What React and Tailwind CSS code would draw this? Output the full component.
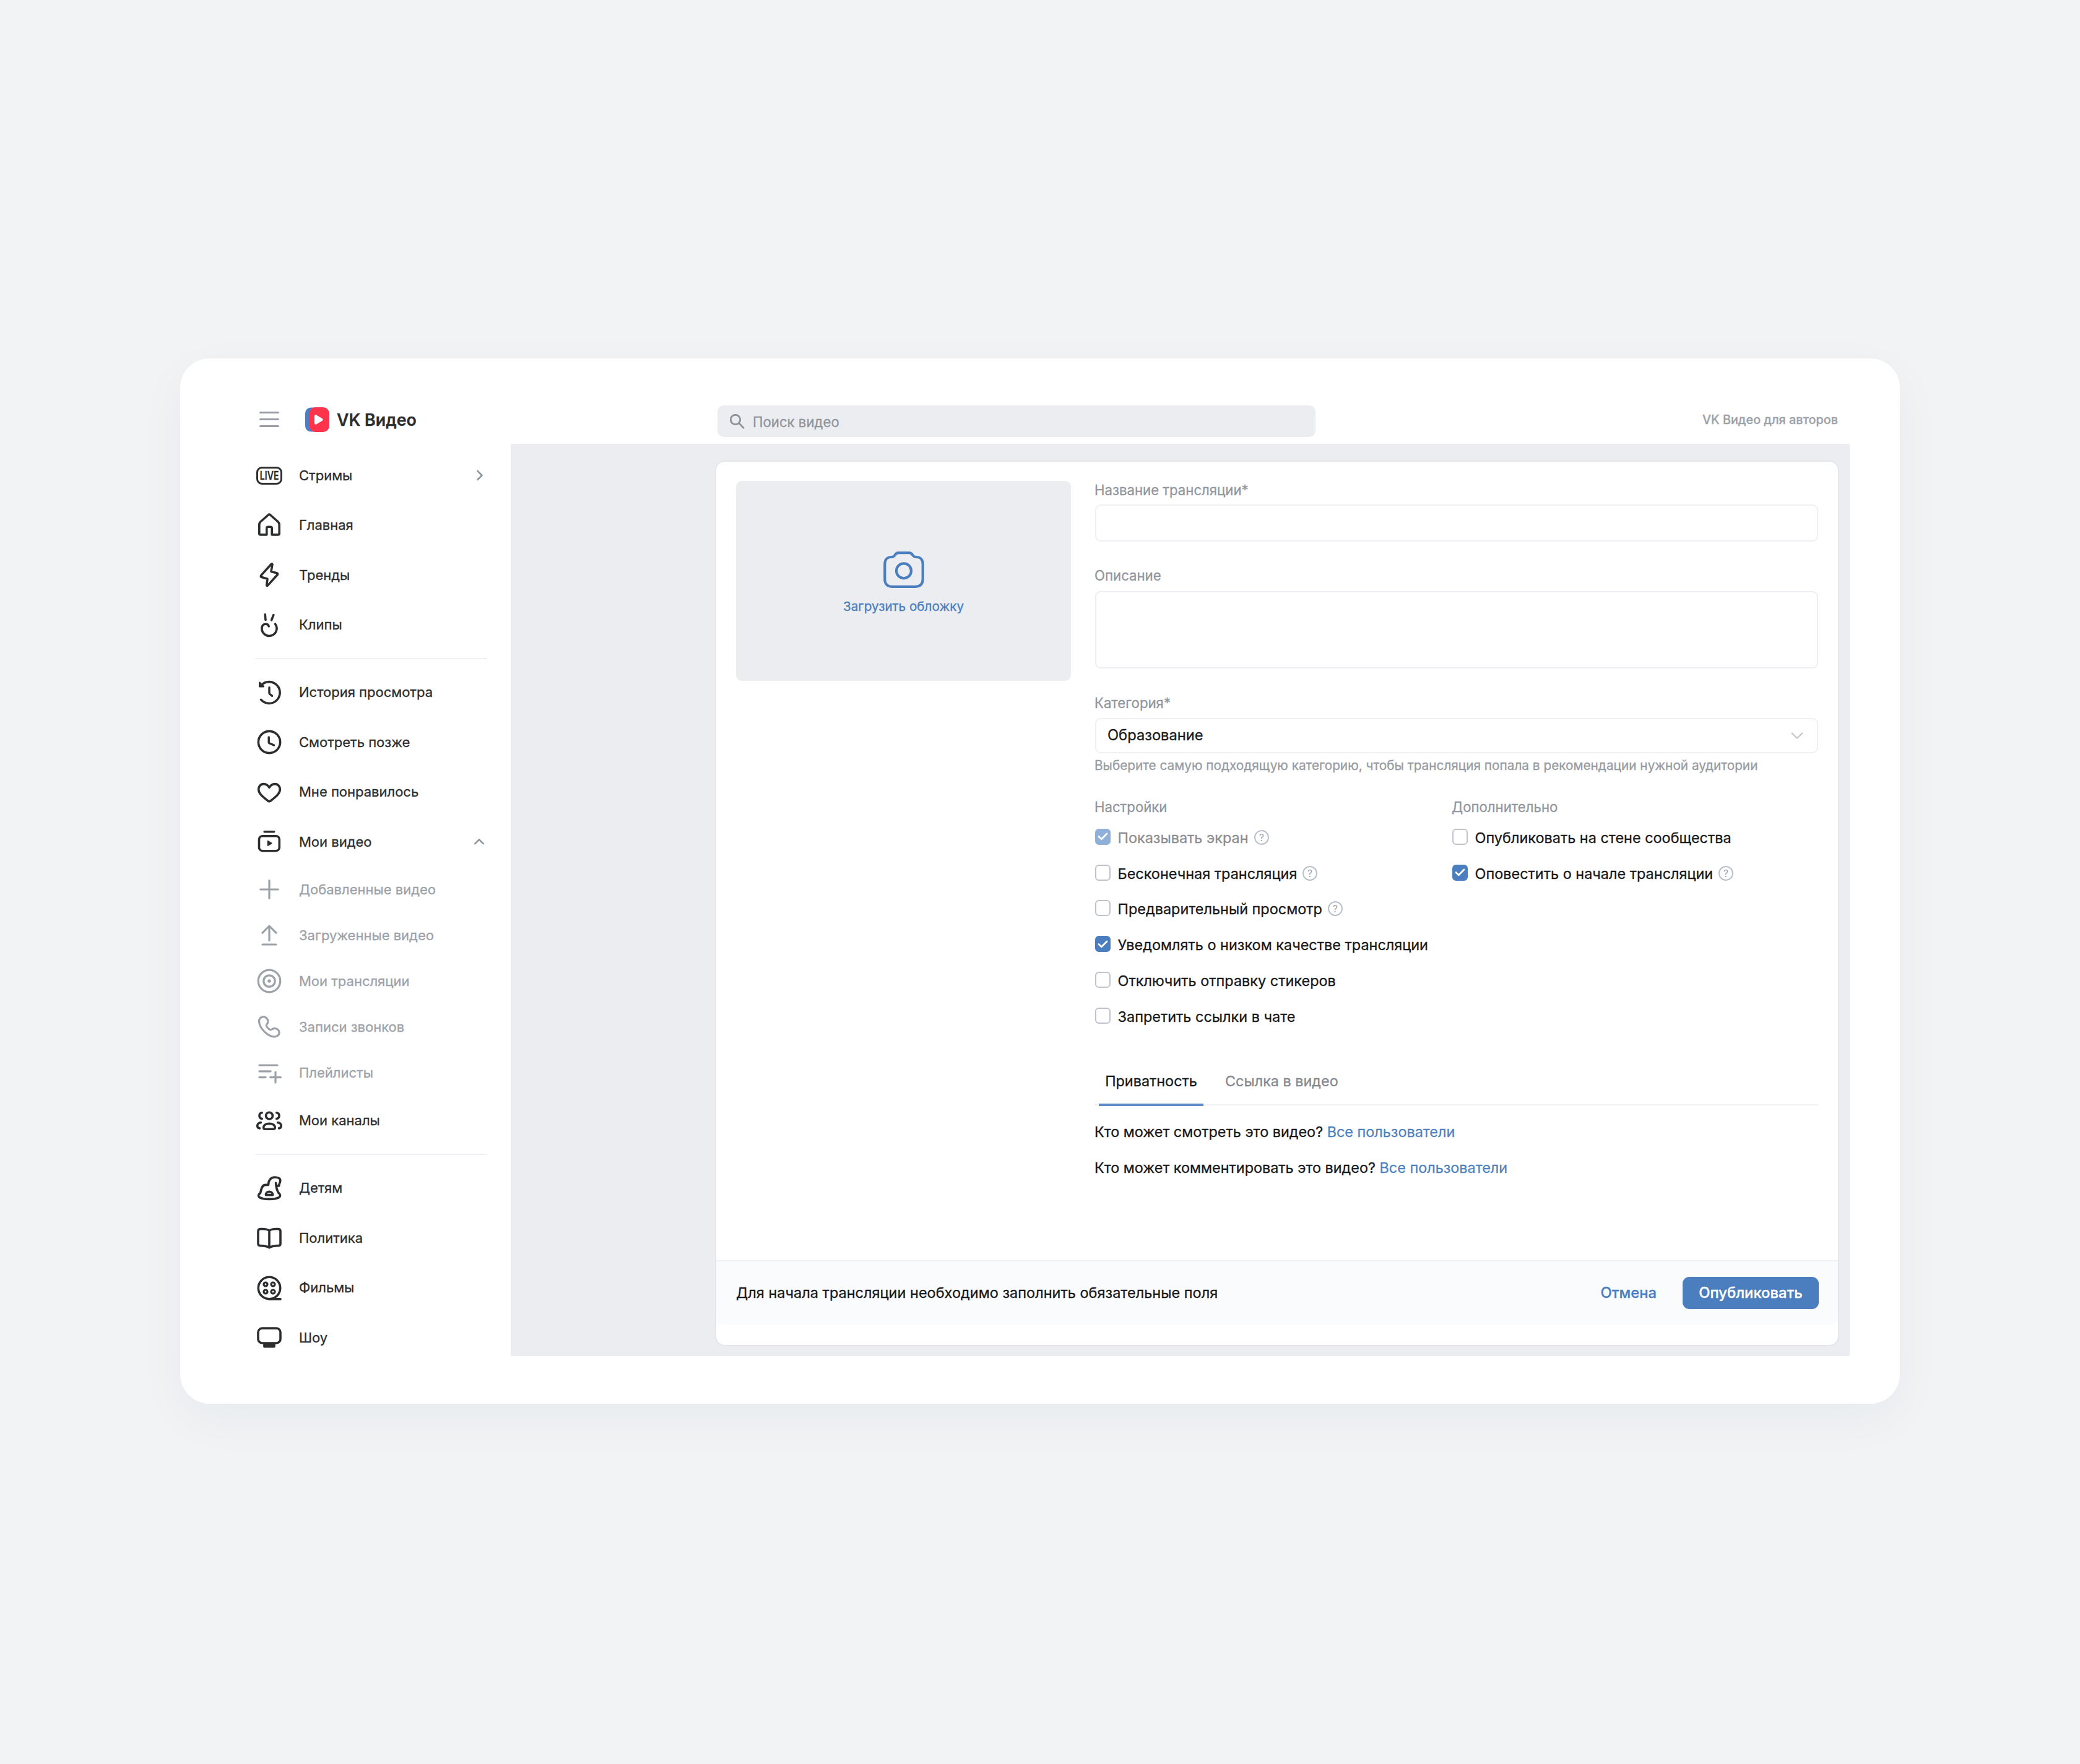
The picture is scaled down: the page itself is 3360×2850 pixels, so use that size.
import React from "react";

// Sidebar icons share one 48x48 grid with the origin in the middle
const Icon = ({ children, thin }) => (
  <svg
    className="size-12 shrink-0 overflow-visible"
    viewBox="-24 -24 48 48"
    fill="none"
    stroke="currentColor"
    strokeWidth={thin ? 3.2 : 3.6}
    strokeLinecap="round"
    strokeLinejoin="round"
  >
    {children}
  </svg>
);

const mainItems = [
  {
    label: "Стримы",
    arrow: "right",
    icon: (
      <div className="flex size-12 shrink-0 items-center justify-center">
        <div className="flex h-[29px] w-[42px] items-center justify-center rounded-[9px] border-[3.4px] border-current">
          <span className="scale-x-[0.76] text-[18.5px] leading-[23px] font-semibold">LIVE</span>
        </div>
      </div>
    ),
  },
  {
    label: "Главная",
    icon: (
      <Icon>
        <path d="M-4.2 14.9V4.2q0-2 2-2h4.4q2 0 2 2v10.7h10q2 0 2-2V-1q0-3-2-5L1.7-17q-1.7-1.5-3.4 0L-14.2-6q-2 2-2 5v13.9q0 2 2 2z" />
      </Icon>
    ),
  },
  {
    label: "Тренды",
    icon: (
      <Icon>
        <path d="M5-17.2 3-5.6 12-3.2q2.6 1 1 3L-2.3 16.6q-2 1.8-1.9-.8L-3 6.2-12.2 3.6q-2.4-1-1-3L2.6-17q1.9-2 2.4-.2z" />
      </Icon>
    ),
  },
  {
    label: "Клипы",
    icon: (
      <Icon>
        <path d="M-6.8-17.3-6-8.7M6.8-16.3 3.6-8.2M9.6-1.8A12 12 0 1 1-12 5C-12 .8-9.3-1.8-5.8-1.8-3-1.8-1.2-.2-.8 1.9" />
      </Icon>
    ),
  },
];

const libraryItems = [
  {
    label: "История просмотра",
    icon: (
      <Icon>
        <path d="M-13.4 11.4A17.4 17.4 0 1 0-13-11.8" />
        <path d="M0-8.3v8.8q0 1 .7 1.7L4.6 5.4" strokeWidth="3.4" />
        <path d="M-15.7-16.2v6.3h6.6z" fill="currentColor" strokeWidth="2.6" />
      </Icon>
    ),
  },
  {
    label: "Смотреть позже",
    icon: (
      <Icon>
        <circle r="17.6" />
        <path d="M-.8-8V.4q0 1 .9 1.4L7.6 5" strokeWidth="3.4" />
      </Icon>
    ),
  },
  {
    label: "Мне понравилось",
    icon: (
      <Icon>
        <path d="M0-7.7C-2-11.2-5-13.4-9-13.4c-5 0-8.3 3.9-8.3 8.9C-17.3 1.5-12 6.2-2 14q2 1.5 4 0C12 6.2 17.3 1.5 17.3-4.5c0-5-3.3-8.9-8.3-8.9C5-13.4 2-11.2 0-7.7z" />
      </Icon>
    ),
  },
  {
    label: "Мои видео",
    arrow: "up",
    icon: (
      <Icon>
        <path d="M-7.8-16.2H7.6" />
        <rect x="-16.5" y="-9.3" width="32.8" height="24" rx="5.5" />
        <path d="M-2.3-1.3v7.4L3.8 2.4z" fill="currentColor" strokeWidth="1.8" />
      </Icon>
    ),
  },
];

const myVideoItems = [
  {
    label: "Добавленные видео",
    icon: (
      <Icon thin>
        <path d="M-14.3 0h28.6M0-14.3v28.6" />
      </Icon>
    ),
  },
  {
    label: "Загруженные видео",
    icon: (
      <Icon thin>
        <path d="M0-14.8V8.5M-11-3.8 0-15 11-3.8M-11 15h22" />
      </Icon>
    ),
  },
  {
    label: "Мои трансляции",
    icon: (
      <Icon thin>
        <circle r="17.8" />
        <circle r="9.2" />
        <circle r="2.8" fill="currentColor" stroke="none" />
      </Icon>
    ),
  },
  {
    label: "Записи звонков",
    icon: (
      <Icon thin>
        <path d="M-9.5-16.3c4 0 7.5 3.8 7.5 7.8 0 3-3.3 4.5-2.7 7 .8 2 3.7 5.3 6.2 6.2 2.5.6 4-2.4 7-2.4 4 0 7.6 3.2 7.6 7.2S12 16.1 8 16.1C-2 16.1-16.3 2-16.5-9c0-4 2.9-7.3 7-7.3z" />
      </Icon>
    ),
  },
  {
    label: "Плейлисты",
    icon: (
      <Icon thin>
        <path d="M-16-12h29.2M-16-2.2H2.2M-16 7.6h10M1.6 7.6h16.8M10-.8V16" />
      </Icon>
    ),
  },
];

const channelItems = [
  {
    label: "Мои каналы",
    icon: (
      <Icon>
        <circle cy="-8.3" r="5.4" />
        <path d="M-9.3 10.8c0-4.3 4.3-6.4 9.3-6.4s9.3 2.1 9.3 6.4q0 2.4-2.4 2.4H-6.9q-2.4 0-2.4-2.4z" />
        <path d="M-11.8-13.3C-14.6-13-16-11-16-8.4s1.5 4.6 4.2 4.9M11.8-13.3C14.6-13 16-11 16-8.4s-1.5 4.6-4.2 4.9M-13.7 2.6c-3.3.3-5.6 2.4-5.6 5.4 0 2.2 1.3 3.6 3.6 3.9M13.7 2.6c3.3.3 5.6 2.4 5.6 5.4 0 2.2-1.3 3.6-3.6 3.9" />
      </Icon>
    ),
  },
];

const topicItems = [
  {
    label: "Детям",
    icon: (
      <Icon>
        <path d="M10.6-8.6C11-2 12.6 4 15.2 7.6c3 2 3 5.4.5 7-6.4 3.7-25 3.7-31.4 0-2.7-2-2.2-5 1.2-7C-13.2 4-13-5.6-6-5.6h4.5C-1.5-13 2.5-18 9-18c5 0 8.8 1.8 8.8 5.3 0 3.7-2.2 5-2.2 8.7l-3.4-.4" />
        <path d="M-5.6 10.6c0-7.2 11.2-7.2 11.2 0z" />
      </Icon>
    ),
  },
  {
    label: "Политика",
    icon: (
      <Icon>
        <path d="M0-11.8C-4.2-14.6-9-14.8-14.6-14.4-17-14.2-18-13-18-11V9.8c0 2 1.2 2.8 3.4 2.8C-8 12.5-4 13 0 15.8 4 13 8 12.5 14.6 12.6c2.2 0 3.4-.8 3.4-2.8V-11c0-2-1-3.2-3.4-3.4C9-14.8 4.2-14.6 0-11.8zM0-11.8v27.6" />
      </Icon>
    ),
  },
  {
    label: "Фильмы",
    icon: (
      <Icon>
        <circle r="17.7" />
        <path d="M0 17.9h18" />
        <g strokeWidth="3.2">
          <circle cx="-6" cy="-6" r="3" />
          <circle cx="6" cy="-6" r="3" />
          <circle cx="-6" cy="6" r="3" />
          <circle cx="6" cy="6" r="3" />
        </g>
      </Icon>
    ),
  },
  {
    label: "Шоу",
    icon: (
      <Icon>
        <rect x="-18" y="-15" width="36" height="24" rx="6.5" />
        <path d="M-8 11.2H8v3.6H-8z" fill="currentColor" />
      </Icon>
    ),
  },
];

const Arrow = ({ dir }) => (
  <svg
    className="size-6 text-[#8f959d]"
    viewBox="-12 -12 24 24"
    fill="none"
    stroke="currentColor"
    strokeWidth="2.6"
    strokeLinecap="round"
    strokeLinejoin="round"
  >
    <path d={dir === "right" ? "M-2.5-7 4.5 0l-7 7" : "M-6.7 3.2 0-3.5l6.7 6.7"} />
  </svg>
);

const NavItem = ({ item }) => (
  <a className="flex h-[80.5px] items-center pr-[39px] pl-[120px] text-[#2c2d2e]">
    {item.icon}
    <span className="ml-6 flex-1 text-[22px]">{item.label}</span>
    {item.arrow && <Arrow dir={item.arrow} />}
  </a>
);

const SubItem = ({ item }) => (
  <a className="flex h-[74px] items-center pl-[120px] text-[#9da2a9]">
    {item.icon}
    <span className="ml-6 text-[22px]">{item.label}</span>
  </a>
);

const Divider = () => <div className="my-[13.2px] ml-[121px] h-0.5 w-[375px] bg-[#eff0f3]" />;

const Sidebar = () => (
  <nav className="w-[534px] shrink-0 pt-[11px]">
    {mainItems.map((item) => (
      <NavItem key={item.label} item={item} />
    ))}
    <Divider />
    {libraryItems.map((item) => (
      <NavItem key={item.label} item={item} />
    ))}
    {myVideoItems.map((item) => (
      <SubItem key={item.label} item={item} />
    ))}
    {channelItems.map((item) => (
      <NavItem key={item.label} item={item} />
    ))}
    <Divider />
    {topicItems.map((item) => (
      <NavItem key={item.label} item={item} />
    ))}
  </nav>
);

const Header = () => (
  <header className="flex h-[138px] items-center pt-[60px] pr-[100px] pl-32">
    <div className="flex w-[740px] items-center">
      <div className="flex w-8 flex-col gap-2 pb-px">
        <span className="h-[3px] rounded-full bg-[#9a9da3]" />
        <span className="h-[3px] rounded-full bg-[#9a9da3]" />
        <span className="h-[3px] rounded-full bg-[#9a9da3]" />
      </div>
      <svg className="ml-[42px] h-10 w-[39px]" viewBox="0 0 39 40">
        <rect y="0.5" width="30" height="39" rx="9" fill="#4a7fc1" />
        <rect x="6.6" y="0" width="32.4" height="40" rx="10" fill="#ff334b" />
        <path
          d="M17 14.2v11.6l9.6-5.8z"
          fill="#fff"
          stroke="#fff"
          strokeWidth="4"
          strokeLinejoin="round"
        />
      </svg>
      <span className="ml-3 text-[26.8px] font-semibold text-[#2c2d2e]">VK Видео</span>
    </div>
    <div className="mt-[5px] flex h-[51px] w-[966px] items-center rounded-[10px] bg-[#ecedf1] pl-5">
      <svg
        className="size-6"
        viewBox="0 0 24 24"
        fill="none"
        stroke="#8e939a"
        strokeWidth="2.8"
        strokeLinecap="round"
      >
        <circle cx="9" cy="9" r="7.7" />
        <path d="m14.8 14.8 7.2 7.4" />
      </svg>
      <span className="mt-0.5 ml-[13px] text-[22.2px] text-[#8f949b]">Поиск видео</span>
    </div>
    <a className="mt-0.5 ml-auto text-[19.8px] font-medium text-[#9da2a9]">VK Видео для авторов</a>
  </header>
);

const Help = () => (
  <svg className="ml-[9px] size-6 overflow-visible" viewBox="0 0 24 24" fill="none">
    <circle cx="12" cy="12" r="11" stroke="#b9bfc8" strokeWidth="1.9" />
    <text
      x="12"
      y="17.6"
      textAnchor="middle"
      fill="#9aa0aa"
      className="font-['Inter',sans-serif] text-[15.5px]"
    >
      ?
    </text>
  </svg>
);

const Checkbox = ({ label, checked, disabled, help }) => (
  <label className="flex h-[57.8px] items-center">
    {checked ? (
      <span
        className={
          "mb-0.5 flex h-[26px] w-[25px] items-center justify-center rounded-[6px] " +
          (disabled ? "bg-[#8fb0d9]" : "bg-[#4a7ebf]")
        }
      >
        <svg
          className="h-[13px] w-[17px]"
          viewBox="0 0 17 13"
          fill="none"
          stroke="#fff"
          strokeWidth="2.8"
          strokeLinecap="round"
          strokeLinejoin="round"
        >
          <path d="m2 6.6 4.3 4.2L15 2" />
        </svg>
      </span>
    ) : (
      <span className="mb-0.5 h-[26px] w-[25px] rounded-[6px] border-2 border-[#bfc4cc] bg-white" />
    )}
    <span
      className={
        "ml-[11.5px] pt-px text-[23.45px] " + (disabled ? "text-[#8b8d91]" : "text-[#18191b]")
      }
    >
      {label}
    </span>
    {help && <Help />}
  </label>
);

const Label = ({ children, className = "" }) => (
  <div className={"-ml-px text-[22.2px] leading-[30px] text-[#91969d] " + className}>
    {children}
  </div>
);

const Form = () => (
  <div className="w-[1168px]">
    <Label>Название трансляции*</Label>
    <div className="mt-2 h-[60px] rounded-[9px] border-2 border-[#eff0f3]" />

    <Label className="mt-10">Описание</Label>
    <div className="mt-[10px] h-[125px] rounded-[9px] border-2 border-[#eceef1]" />

    <Label className="mt-[41px]">Категория*</Label>
    <div className="mt-[9px] flex h-[57px] items-center justify-between rounded-[9px] border-2 border-[#eff0f3] pr-5 pb-px pl-[18px]">
      <span className="text-[23.7px] text-[#18191b]">Образование</span>
      <svg
        className="h-6 w-6"
        viewBox="-12 -12 24 24"
        fill="none"
        stroke="#bfc4cd"
        strokeWidth="2.2"
        strokeLinecap="round"
        strokeLinejoin="round"
      >
        <path d="M-8.5-3.5 0 4.5l8.5-8" />
      </svg>
    </div>
    <p className="mt-[5px] -ml-px text-[20.77px] leading-[30px] whitespace-nowrap text-[#969ba2]">
      Выберите самую подходящую категорию, чтобы трансляция попала в рекомендации нужной аудитории
    </p>

    {/* Settings */}
    <div className="mt-[37px] flex">
      <div className="w-[577px]">
        <Label className="mb-[5px]">Настройки</Label>
        <Checkbox label="Показывать экран" checked disabled help />
        <Checkbox label="Бесконечная трансляция" help />
        <Checkbox label="Предварительный просмотр" help />
        <Checkbox label="Уведомлять о низком качестве трансляции" checked />
        <Checkbox label="Отключить отправку стикеров" />
        <Checkbox label="Запретить ссылки в чате" />
      </div>
      <div>
        <Label className="mb-[5px]">Дополнительно</Label>
        <Checkbox label="Опубликовать на стене сообщества" />
        <Checkbox label="Оповестить о начале трансляции" checked help />
      </div>
    </div>

    {/* Privacy tabs */}
    <div className="mt-[41px] flex h-[74px] items-start border-b-2 border-[#f0f1f3] pl-1.5 text-[23.4px]">
      <div className="flex h-[75px] w-[169px] items-center justify-center border-b-4 border-[#5c8bc8] pb-px text-[#18191b]">
        Приватность
      </div>
      <div className="ml-[35px] flex h-[70px] items-center text-[#84888e]">Ссылка в видео</div>
    </div>
    <div className="mt-[14px] -ml-px text-[23.4px] leading-[58px] text-[#18191b]">
      <p>
        Кто может смотреть это видео? <a className="text-[#4f82c1]">Все пользователи</a>
      </p>
      <p>
        Кто может комментировать это видео? <a className="text-[#4f82c1]">Все пользователи</a>
      </p>
    </div>
  </div>
);

const Footer = () => (
  <footer className="mt-auto mb-[33px] flex h-[104px] items-center rounded-b-[10px] border-t-2 border-[#eff0f2] bg-[#fafbfd] pr-[31px] pl-8">
    <p className="text-[23.5px] text-[#18191b]">
      Для начала трансляции необходимо заполнить обязательные поля
    </p>
    <button className="ml-auto text-[23.8px] font-medium text-[#4a7ebf]">Отмена</button>
    <button className="ml-[42px] h-[52px] w-[220px] rounded-[11px] bg-[#4a7ebf] text-[23.8px] font-medium text-white">
      Опубликовать
    </button>
  </footer>
);

const App = () => {
  return (
    <div className="h-[2850px] w-[3360px] bg-[#f1f3f5] pt-[579px] pl-[291px] font-['Inter',sans-serif] [-webkit-text-stroke-width:0.3px]">
      <div className="h-[1689px] w-[2778px] rounded-[48px] bg-white shadow-[0_24px_80px_rgba(30,40,80,0.045)]">
        <Header />
        <div className="flex h-[1474px]">
          <Sidebar />
          <main className="w-[2163px] bg-[#ecedf1] pt-[29px] pr-[19px] pb-[18px] pl-[332px]">
            <div className="flex h-full flex-col rounded-[14px] bg-white shadow-[0_0_0_2px_#e4e6ea]">
              <div className="flex gap-[39px] pt-[31px] pl-8">
                <div className="flex h-[323px] w-[541px] flex-col items-center rounded-[9px] bg-[#ecedf1] pt-[114px] text-[#4a7ebf]">
                  <svg
                    className="h-[59px] w-[66px]"
                    viewBox="0 0 66 59"
                    fill="none"
                    stroke="currentColor"
                    strokeWidth="4.2"
                  >
                    <path d="M2.3 20.5C2.3 13 6.5 9 12.5 9c3.5 0 4.5-.5 6-3s2.5-3.8 6-3.8h17c3.5 0 4.5 1.300 6 3.800s2.500 3 6 3c6 0 10.200 4 10.200 11.500v24c0 8-4.200 12.300-11.700 12.300h-38c-7.500 0-11.700-4.300-11.700-12.300z" />
                    <circle cx="33" cy="31.3" r="12" />
                  </svg>
                  <span className="mt-[15px] text-[20.7px] leading-[30px]">Загрузить обложку</span>
                </div>
                <Form />
              </div>
              <Footer />
            </div>
          </main>
        </div>
      </div>
    </div>
  );
};

export default App;
